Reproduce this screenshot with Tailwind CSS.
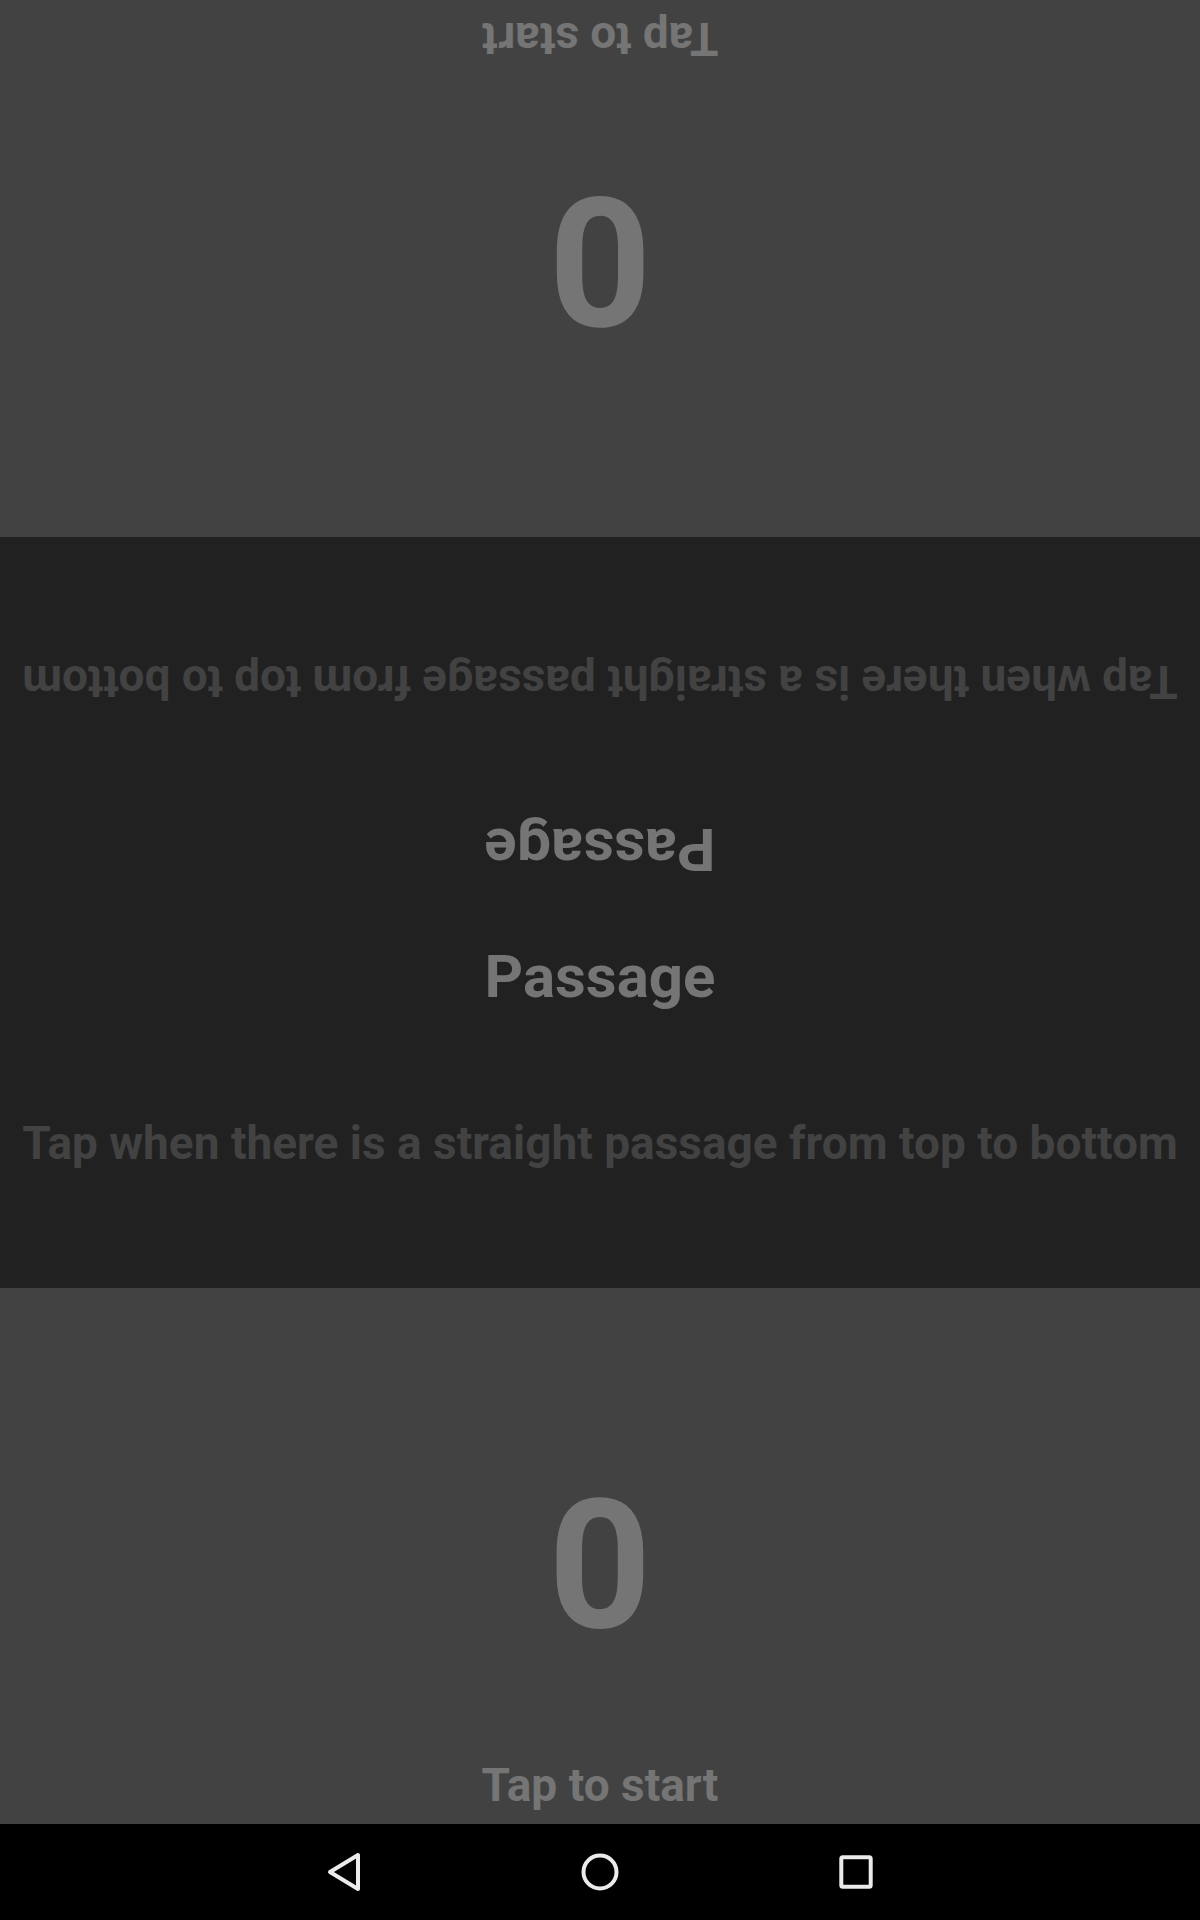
<!DOCTYPE html>
<html lang="en"><head><meta charset="utf-8"><title>Passage</title>
<script src="https://cdn.jsdelivr.net/npm/@tailwindcss/browser@4"></script></head>
<body class="flex h-[1920px] w-[1200px] flex-col overflow-hidden bg-black font-['Roboto',sans-serif] font-bold text-[#757575]">
<section class="flex h-[537px] rotate-180 flex-col items-center bg-[#424242]">
<div class="flex h-[470px] w-full items-center justify-center pt-[86px] text-[180px] leading-none">0</div>
<p class="text-[46px] leading-[56px]">Tap to start</p>
</section>
<main class="flex h-[751px] flex-col bg-[#212121] text-center whitespace-nowrap">
<div class="flex h-[375px] rotate-180 flex-col pt-[27px]"><h1 class="text-[60px] leading-[71px]">Passage</h1><p class="mt-[104px] text-[46px] leading-[56px] text-[#424242]">Tap when there is a straight passage from top to bottom</p></div>
<div class="flex h-[376px] flex-col pt-[29px]"><h1 class="text-[60px] leading-[71px]">Passage</h1><p class="mt-[103px] text-[46px] leading-[56px] text-[#424242]">Tap when there is a straight passage from top to bottom</p></div>
</main>
<section class="flex h-[536px] flex-col items-center bg-[#424242]">
<div class="flex h-[469px] w-full items-center justify-center pt-[87px] text-[180px] leading-none">0</div>
<p class="text-[46px] leading-[56px]">Tap to start</p>
</section>
<nav class="flex h-24 items-center justify-center bg-black">
<svg width="1200" height="96" viewBox="0 0 1200 96" fill="none" stroke="#ebebeb" stroke-width="4"><path d="M330 48L358 31V65Z" stroke-linejoin="round"/><circle cx="600" cy="48" r="16.5"/><rect x="841.3" y="33.3" width="29.4" height="29.4" rx="1.5"/></svg>
</nav></body></html>
